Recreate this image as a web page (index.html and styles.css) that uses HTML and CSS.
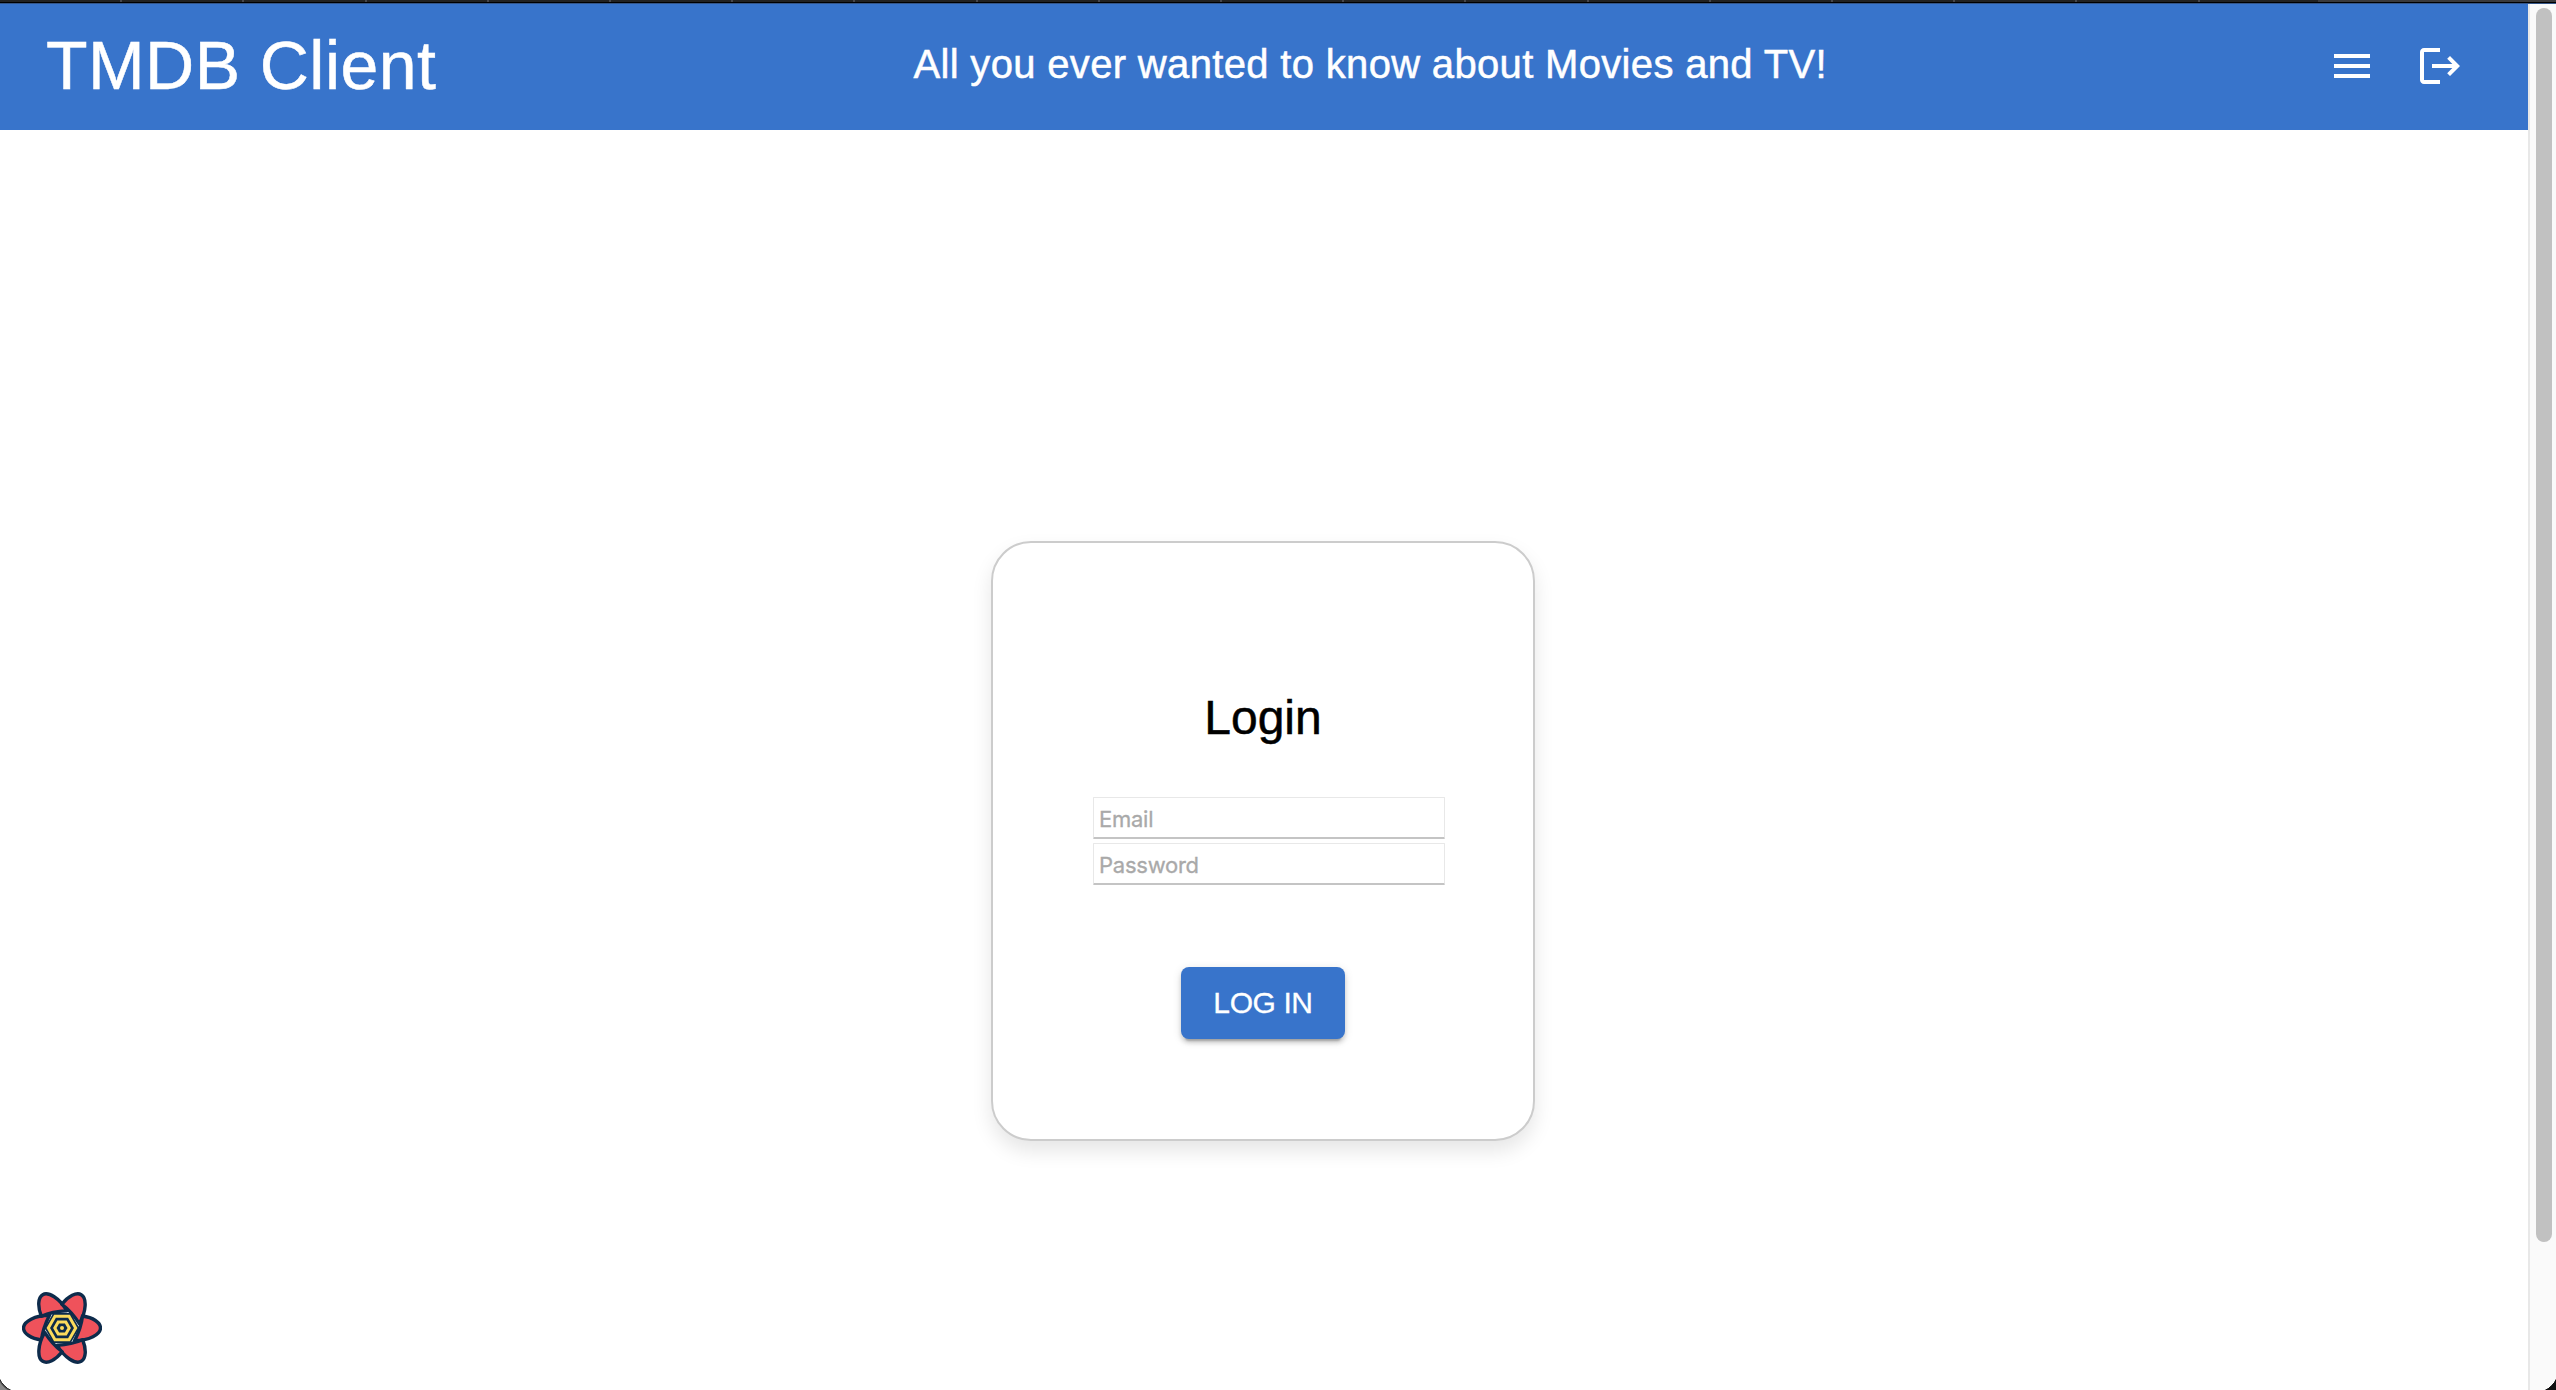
FILE: index.html
```html
<!DOCTYPE html>
<html lang="en">
<head>
<meta charset="utf-8">
<title>TMDB Client</title>
<link rel="stylesheet" href="styles.css">
</head>
<body>
<div class="tabstrip"></div>
<div class="viewport">
  <div class="page">
    <header class="appbar">
      <h1 class="brand">TMDB Client</h1>
      <p class="tagline">All you ever wanted to know about Movies and TV!</p>
      <nav class="actions">
        <svg class="icon" viewBox="0 0 24 24"><path d="M3 18h18v-2H3v2zm0-5h18v-2H3v2zm0-7v2h18V6H3z"/></svg>
        <svg class="icon" viewBox="0 0 24 24"><path d="m17 7-1.41 1.41L18.17 11H8v2h10.17l-2.58 2.58L17 17l5-5zM4 5h8V3H4c-1.1 0-2 .9-2 2v14c0 1.100.9 2 2 2h8v-2H4V5z"/></svg>
      </nav>
    </header>
    <main class="content">
      <form class="card">
        <h2 class="card-title">Login</h2>
        <div class="fields">
          <input class="field" type="text" placeholder="Email">
          <input class="field" type="password" placeholder="Password">
        </div>
        <button class="submit" type="button">LOG IN</button>
      </form>
    </main>
  </div>
  <div class="scrollbar"><div class="thumb"></div></div>
</div>
<svg class="devtools" viewBox="0 0 80 72">
  <g fill="#ef525b" stroke="#0d2b4b" stroke-width="3.4" stroke-linejoin="round">
    <path id="petal" d="M27.500 23.200C13 23.200 1.500 29.500 1.500 36C1.500 41.500 9 46.500 19.500 48C20.500 39 23.500 31 27.500 23.200Z"/>
    <use href="#petal" transform="rotate(60 40 36)"/>
    <use href="#petal" transform="rotate(120 40 36)"/>
    <use href="#petal" transform="rotate(180 40 36)"/>
    <use href="#petal" transform="rotate(240 40 36)"/>
    <use href="#petal" transform="rotate(300 40 36)"/>
  </g>
  <path d="M31.300 21h17.400L57.400 36l-8.700 15H31.300L22.600 36z" fill="#0d2b4b"/>
  <g fill="none" stroke="#fbdb5c" stroke-width="3">
    <path d="M33 24.200h14L53.700 36 47 47.800H33L26.300 36z"/>
    <path d="M36.200 30h7.600L47.200 36l-3.400 6h-7.600L32.800 36z"/>
  </g>
  <circle cx="40" cy="36" r="2" fill="#fbdb5c"/>
</svg>
<div class="corner corner-left"></div>
<div class="corner corner-right"></div>
</body>
</html>
```
FILE: styles.css
```css
* { box-sizing: border-box; }
body {
  margin: 0;
  height: 1390px;
  display: flex;
  flex-direction: column;
  position: relative;
  overflow: hidden;
  background: #fff;
  font-family: "Liberation Sans", Arial, sans-serif;
}
.tabstrip {
  height: 4px;
  flex: none;
  background:
    linear-gradient(#0000 2px, #000 2px, #000 3px, #34568a 3px),
    linear-gradient(90deg, #0000 2318px, #3a3a3c 2318px),
    repeating-linear-gradient(90deg, #222 0 120.200px, #47474c 120.200px 122.200px);
}
.viewport { flex: 1; display: flex; min-height: 0; }
.page { flex: 1; display: flex; flex-direction: column; }
.appbar {
  height: 126px;
  display: flex;
  justify-content: space-between;
  align-items: center;
  padding: 0 40px 2px 46px;
  background: #3874cb;
  color: #fff;
}
.brand, .tagline, .card-title { -webkit-text-stroke: .5px currentColor; }
.brand { margin: 0 0 2px; font-size: 68px; font-weight: 400; letter-spacing: .45px; line-height: 84px; }
.tagline { margin: 0 0 4px; font-size: 40px; letter-spacing: .33px; line-height: 64px; }
.actions { display: flex; gap: 40px; padding: 0 24px; }
.icon { width: 48px; height: 48px; fill: currentColor; }
.content { flex: 1; display: flex; justify-content: center; padding: 411px 2px 0 0; }
.card {
  width: 544px;
  height: 600px;
  display: flex;
  flex-direction: column;
  align-items: center;
  padding-top: 143px;
  border: 2px solid #ccc;
  border-radius: 40px;
  background: #fff;
  box-shadow: 0 10px 20px rgba(0, 0, 0, .1);
}
.card-title { margin: 0; font-size: 48px; font-weight: 400; line-height: 64px; color: #000; }
.fields { display: flex; flex-direction: column; gap: 4px; margin: 47px 0 0 12px; }
.field {
  width: 352px;
  height: 42px;
  padding: 3px 5px 0;
  border: 1px solid #e8e8e8;
  border-bottom: 2px solid #c4c4c4;
  border-radius: 1px;
  background: #fff;
  font: 22px Inter, sans-serif;
  letter-spacing: -.25px;
}
.field::placeholder { color: #a9a9a9; opacity: 1; -webkit-text-stroke: .3px #a9a9a9; }
.submit {
  width: 164px;
  height: 72px;
  margin-top: 82px;
  padding: 0;
  border: 0;
  border-radius: 8px;
  background: #3874cb;
  color: #fff;
  font: 30px "Liberation Sans", Arial, sans-serif;
  letter-spacing: -.4px;
  -webkit-text-stroke: .3px currentColor;
  box-shadow: 0 6px 2px -4px rgba(0, 0, 0, .2), 0 4px 4px rgba(0, 0, 0, .14), 0 2px 10px rgba(0, 0, 0, .12);
}
.scrollbar { width: 28px; padding: 4px 4px 0 6px; border-left: 2px solid #e8e8e8; background: #fafafa; }
.thumb { height: 1234px; border-radius: 8px; background: #c1c1c1; }
.devtools { position: absolute; left: 22px; top: 1292px; width: 80px; height: 72px; }
.corner { position: absolute; bottom: 0; width: 12px; height: 12px; }
.corner-left { left: 0; background: radial-gradient(circle at 20px -8px, #0000 21.500px, #222 22px, #888 24px); }
.corner-right { right: 0; background: radial-gradient(circle at -8px -8px, #0000 21.500px, #111 22px); }
```
